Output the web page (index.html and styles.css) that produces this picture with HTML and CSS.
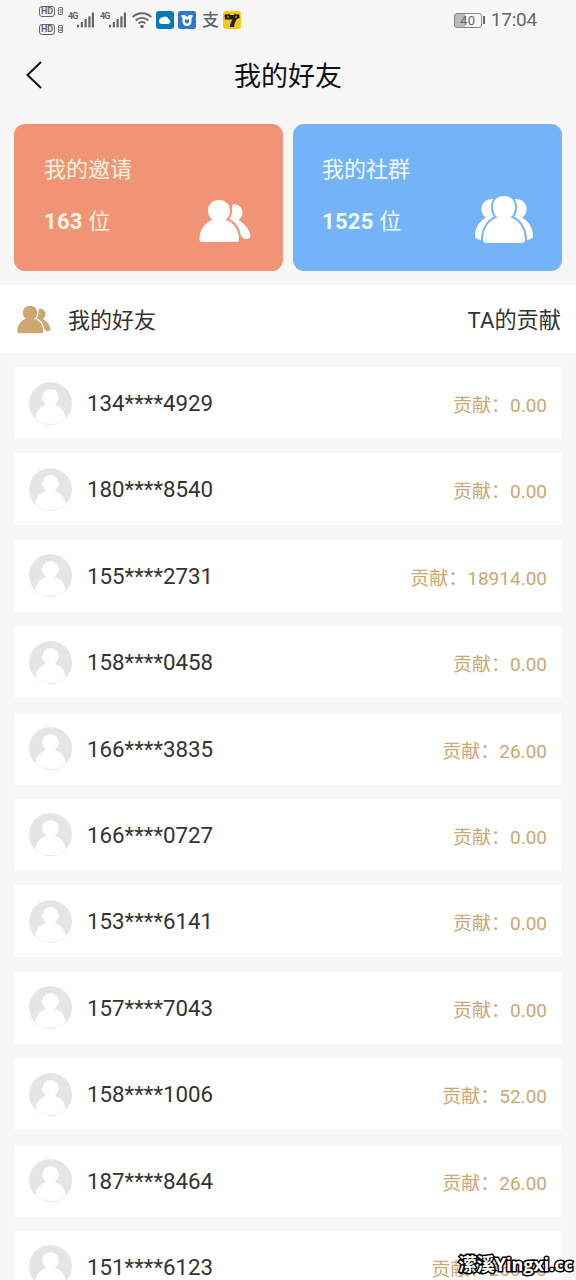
FILE: index.html
```html
<!DOCTYPE html>
<html lang="zh-CN">
<head>
<meta charset="utf-8">
<title>我的好友</title>
<link rel="stylesheet" href="styles.css">
</head>
<body>
<svg class="defs" width="0" height="0">
  <symbol id="pair" viewBox="0 0 52 44">
    <path d="M34 5c5.500 0 9.500 3.500 9.500 8.500 0 3-1.500 5.500-4 7.500C46 25 50 30 51.500 36.500c.3 2.500-3 4.500-7 3L28 22Z"/>
    <path class="front" d="M20 1C26.500 1 31 5.500 31 11.500c0 4-1.500 7-4.500 9.500C35 23.500 39.500 30 40 39.500c.1 2.500-.5 3.500-2.500 3.500H3c-2 0-2.500-1-2.500-3.500C1 30 6 23.500 13.500 21c-3-2.500-4.500-5.500-4.500-9.500C9 5.500 13.500 1 20 1Z"/>
  </symbol>
  <symbol id="group" viewBox="0 0 60 50">
    <path d="M18 4c-6 0-10.500 4-10.500 10 0 4 1.500 6.500 4.500 8.500C5 26.500 1 33 1 41.500c0 2 3 3 6 3.500h46c3-.5 6-1.500 6-3.500 0-8.500-4-15-11-19 3-2 4.500-4.500 4.500-8.500 0-6-4.500-10-10.500-10Z"/>
    <path class="front" d="M30 1c6.800 0 11 4.500 11 11 0 5-1.800 8.500-4.500 10.500C45 25 50.500 33 51 44c0 3-1 4-4 4H13c-3 0-4-1-4-4 .5-11 6-19 14.500-21.500C20.800 20.500 19 17 19 12 19 5.500 23.200 1 30 1Z"/>
  </symbol>
  <symbol id="avatar" viewBox="0 0 44 44">
    <circle cx="22" cy="22" r="22" fill="#e5e5e5"/>
    <path d="M22 7.500c5 0 8 3 8 7.500 1 1 .5 3-.5 4-.7 2-1.800 3.500-3 4.500C32 25 36.500 29 37.500 37c-4 4-9 6-15.500 6S10.500 41 6.500 37C7.500 29 12 25 17.500 23.500c-1.200-1-2.300-2.500-3-4.500-1-1-1.500-3-.5-4 0-4.500 3-7.500 8-7.500Z" fill="#fff"/>
  </symbol>
  <symbol id="signal" viewBox="0 0 18 17">
    <path d="M0 13h2.300v3H0zM4 10h2.300v6H4zM8 7h2.300v9H8zM12 4h2.300v12H12zM15.700 0H18v16h-2.300z"/>
  </symbol>
</svg>

<header class="status">
  <div class="hd"><span><b>HD</b><i>1</i></span><span><b>HD</b><i>2</i></span></div>
  <div class="cell"><small>4G</small><svg class="signal"><use href="#signal"/></svg></div>
  <div class="cell"><small>4G</small><svg class="signal"><use href="#signal"/></svg></div>
  <svg class="wifi" viewBox="0 0 20 17"><g fill="none" stroke="#666" stroke-width="1.900"><path d="M.7 5.200c5-5.200 13.600-5.200 18.600 0M3.700 8.500c3.400-3.500 9.200-3.500 12.600 0M6.700 11.500c2-2 4.600-2 6.600 0"/></g><circle cx="10" cy="14.500" r="1.800" fill="#666"/></svg>
  <svg class="app app-cloud" viewBox="0 0 18 18"><rect width="18" height="18" rx="3" fill="#0879b5"/><path d="M5.500 13a3 3 0 0 1-.8-5.700 1.600 1.600 0 0 1 2.300-.8 3.300 3.300 0 0 1 5.500 1.500A2.600 2.600 0 0 1 12.500 13Z" fill="#fff"/></svg>
  <svg class="app app-shield" viewBox="0 0 18 18"><rect width="18" height="18" rx="2.500" fill="#3676d3"/><path d="M3.500 4h4v1.500h3V4h4v2l-1 1v3.500c0 2.500-2 4.500-4.500 4.500s-4.500-2-4.500-4.500V7l-1-1Z" fill="#fff"/><path d="M7 8h4v2.500a2 2 0 0 1-4 0Z" fill="#3676d3"/><path d="M8.500 6h1.500v3H8.500z" fill="#fff"/></svg>
  <span class="pay">支</span>
  <svg class="app app-seven" viewBox="0 0 18 18"><rect width="18" height="18" rx="3" fill="#fbc51b"/><path d="M1.500 4l1.500-1 1 1 1.500-1.500L7 4h4l1.500-1.500L14 4l1-1 1.500 1v3l-2.500 1c-1.500 2-2.500 4-3 8H7c0-3 1.200-5.500 2.700-7.500L2 8.500Z" fill="#241f12"/><path d="M4 6h2M12 6h2" stroke="#fbc51b"/></svg>
  <div class="battery"><span>40</span></div>
  <time>17:04</time>
</header>

<nav class="nav">
  <svg class="back" viewBox="0 0 18 30"><path d="M16 2 2.500 15 16 28" fill="none" stroke="#111" stroke-width="2"/></svg>
  <h1>我的好友</h1>
</nav>

<section class="cards">
  <article class="card card-invite"><p>我的邀请</p><p><b>163</b> 位</p><svg class="pair-icon"><use href="#pair"/></svg></article>
  <article class="card card-group"><p>我的社群</p><p><b>1525</b> 位</p><svg class="group-icon"><use href="#group"/></svg></article>
</section>

<section class="heading">
  <svg class="heading-icon"><use href="#pair"/></svg>
  <h2>我的好友</h2>
  <span>TA的贡献</span>
</section>

<ul class="list">
  <li><svg><use href="#avatar"/></svg><span>134****4929</span><em>贡献：0.00</em></li>
  <li><svg><use href="#avatar"/></svg><span>180****8540</span><em>贡献：0.00</em></li>
  <li><svg><use href="#avatar"/></svg><span>155****2731</span><em>贡献：18914.00</em></li>
  <li><svg><use href="#avatar"/></svg><span>158****0458</span><em>贡献：0.00</em></li>
  <li><svg><use href="#avatar"/></svg><span>166****3835</span><em>贡献：26.00</em></li>
  <li><svg><use href="#avatar"/></svg><span>166****0727</span><em>贡献：0.00</em></li>
  <li><svg><use href="#avatar"/></svg><span>153****6141</span><em>贡献：0.00</em></li>
  <li><svg><use href="#avatar"/></svg><span>157****7043</span><em>贡献：0.00</em></li>
  <li><svg><use href="#avatar"/></svg><span>158****1006</span><em>贡献：52.00</em></li>
  <li><svg><use href="#avatar"/></svg><span>187****8464</span><em>贡献：26.00</em></li>
  <li><svg><use href="#avatar"/></svg><span>151****6123</span><em>贡献：260.00</em></li>
</ul>
<div class="watermark">潆溪Yingxi.cc</div>
</body>
</html>
```
FILE: styles.css
```css
* { box-sizing: border-box; margin: 0; padding: 0; }
body {
  position: relative;
  height: 1280px;
  overflow: hidden;
  background: #f7f7f7;
  color: #333;
  font-family: Roboto, "Noto Sans CJK SC", sans-serif;
}
.defs { position: absolute; }
/* The front figure is separated from those behind it by a background-coloured outline. */
.front { stroke: var(--gap); stroke-width: 4px; paint-order: stroke fill; }

.status { display: flex; align-items: center; height: 40px; padding: 0 39px; color: #666; }
.hd { display: flex; flex-direction: column; gap: 7px; width: 24px; margin-right: 5px; }
.hd span { display: flex; align-items: center; gap: 3px; height: 11px; }
.hd b { display: flex; justify-content: center; width: 16px; height: 11px; border: 1.5px solid #666; border-radius: 3px; font-size: 9px; line-height: 9px; }
.hd i { width: 5px; height: 8px; border: 1px solid #777; border-radius: 1px; font: bold 6px/6px Roboto, sans-serif; text-align: center; }
.cell { display: flex; align-items: flex-start; width: 27px; height: 17px; margin-right: 5px; }
.cell small { width: 9px; font-size: 9px; font-weight: 700; line-height: 9px; letter-spacing: -1px; }
.signal { width: 17px; height: 17px; fill: #666; }
.wifi { width: 20px; height: 17px; margin-right: 4px; }
.app { width: 18px; height: 18px; }
.app-cloud { margin-right: 4px; }
.app-shield { margin-right: 6px; }
.pay { width: 16px; margin-right: 5px; font-size: 17px; line-height: 18px; font-weight: 500; }
.battery { position: relative; width: 28px; height: 15px; margin-left: auto; margin-right: 9px; border: 1.5px solid #888; border-radius: 3px; background: linear-gradient(90deg, #bbb 40%, #f7f7f7 40%); font-size: 13px; line-height: 13px; text-align: center; }
.battery::after { content: ""; position: absolute; right: -4px; top: 2px; width: 2px; height: 8px; background: #666; }
.status time { font-size: 19px; line-height: 22px; letter-spacing: -.2px; }

.nav { display: grid; grid-template-columns: 70px 1fr 70px; align-items: center; height: 70px; }
.back { width: 18px; height: 30px; margin-left: 25px; }
.nav h1 { padding-top: 3px; color: #111; font-size: 27px; font-weight: 400; line-height: 40px; text-align: center; }

.cards { display: grid; grid-template: 147px / 1fr 1fr; gap: 10px; padding: 14px 14px; height: 175px; }
.card { position: relative; padding: 30px 30px 0; border-radius: 11px; font-size: 22px; }
.card-invite { --gap: #f09475; background: #f09475; color: #fff3df; }
.card-group { --gap: #74b3f7; background: #74b3f7; color: #effcff; padding-left: 29px; }
.card p { line-height: 32px; margin-bottom: 20px; }
.card b { letter-spacing: .3px; }
.pair-icon { position: absolute; right: 32px; bottom: 28px; width: 52px; height: 44px; fill: #fff; }
.group-icon { position: absolute; right: 28px; bottom: 26px; width: 60px; height: 50px; fill: #fff; }

.heading { --gap: #fff; display: flex; align-items: center; height: 68px; padding: 0 15px 0 17px; background: #fff; }
.heading-icon { width: 34px; height: 29px; margin-right: 17px; fill: #cda672; }
.heading h2 { margin-top: -2px; font-size: 22px; font-weight: 400; }
.heading span { margin: -2px 0 0 auto; font-size: 22.2px; }

.list { display: flex; flex-direction: column; gap: 14.4px; padding: 14px 14px 0; list-style: none; }
.list li { display: flex; align-items: center; flex: none; height: 72px; padding: 0 15px; background: #fff; border-radius: 3px; }
.list svg { width: 43px; height: 43px; margin-right: 15px; }
.list span { font-size: 22.3px; }
.list em { margin: 1px 0 0 auto; color: #cda672; font-size: 19px; font-style: normal; }

.watermark {
  position: absolute; right: 3px; top: 1251px;
  color: #fff; font: 700 18px/26px "Open Sans", "Noto Sans CJK SC", sans-serif; white-space: nowrap;
  -webkit-text-stroke: 3px #000; paint-order: stroke fill;
}
```
